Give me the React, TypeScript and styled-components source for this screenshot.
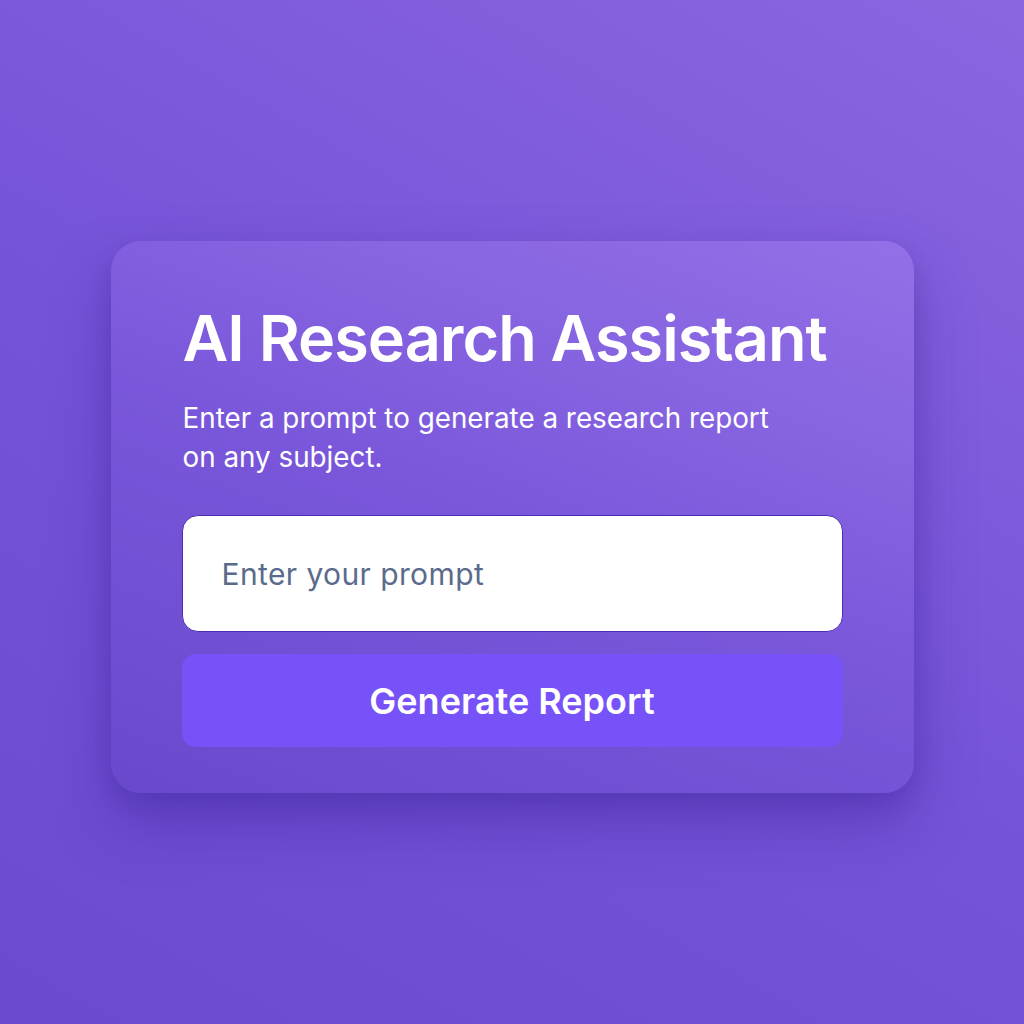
import React from "react";
import styled, { createGlobalStyle } from "styled-components";

const GlobalStyle = createGlobalStyle`
  html, body {
    margin: 0;
    padding: 0;
  }
  body {
    font-family: Inter, "Noto Sans", sans-serif;
  }
`;

const Page = styled.div`
  width: 1024px;
  height: 1024px;
  display: flex;
  align-items: flex-start;
  justify-content: center;
  padding-top: 241px;
  box-sizing: border-box;
  background: linear-gradient(30deg, #6a4acf 0%, #7654d8 50%, #8b66e1 100%);
`;

const Card = styled.div`
  width: 803px;
  height: 552px;
  box-sizing: border-box;
  padding: 57px 71px 0 71px;
  border-radius: 30px;
  background: linear-gradient(
    200deg,
    rgba(150, 115, 232, 0.85) 0%,
    rgba(125, 90, 220, 0.6) 50%,
    rgba(100, 70, 200, 0.6) 100%
  );
  box-shadow: 0 30px 60px rgba(50, 25, 140, 0.35),
    0 10px 20px rgba(50, 25, 140, 0.15);
`;

const Title = styled.h1`
  margin: 0 0 0 1px;
  font-size: 63px;
  font-weight: 600;
  letter-spacing: -1px;
  line-height: 80px;
  white-space: nowrap;
  color: #ffffff;
`;

const Subtitle = styled.p`
  margin: 21px 0 0 1px;
  max-width: 620px;
  font-size: 27.8px;
  line-height: 39px;
  font-weight: 400;
  color: #ffffff;
`;

const PromptInput = styled.input`
  display: block;
  width: 100%;
  height: 117px;
  margin-top: 38px;
  box-sizing: border-box;
  padding: 0 0 0 39px;
  border: 1px solid #4a2db4;
  border-radius: 16px;
  background: #ffffff;
  font-family: Inter, "Noto Sans", sans-serif;
  font-size: 30px;
  letter-spacing: 0.4px;
  color: #33415c;
  outline: none;

  &::placeholder {
    color: #5b6b8c;
  }
`;

const Button = styled.button`
  display: block;
  width: 100%;
  height: 93px;
  margin-top: 22px;
  border: none;
  border-radius: 14px;
  background: #7752f8;
  font-family: Inter, "Noto Sans", sans-serif;
  font-size: 36px;
  font-weight: 600;
  color: #ffffff;
  cursor: pointer;
`;

export default function App() {
  return (
    <>
      <GlobalStyle />
      <Page>
        <Card>
          <Title>AI Research Assistant</Title>
          <Subtitle>
            Enter a prompt to generate a research report on any subject.
          </Subtitle>
          <PromptInput placeholder="Enter your prompt" />
          <Button>Generate Report</Button>
        </Card>
      </Page>
    </>
  );
}
